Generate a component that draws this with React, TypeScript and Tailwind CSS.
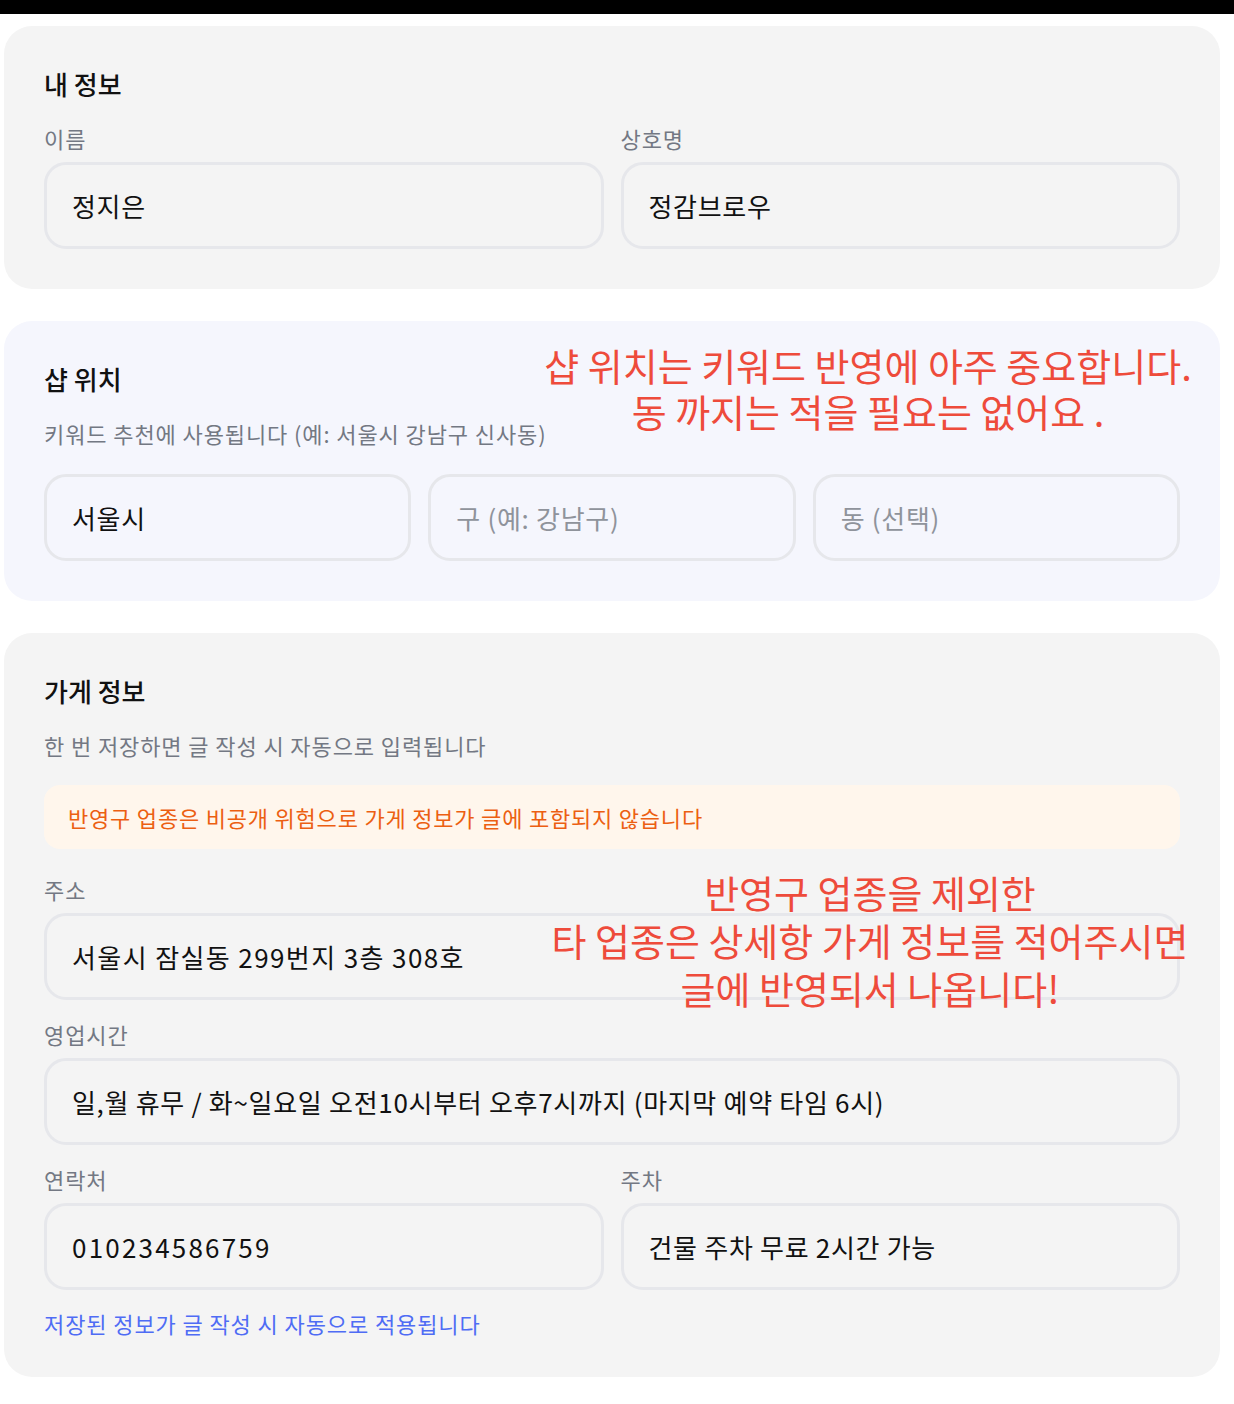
import React from "react";

function Field({
  label,
  value,
  placeholder,
  track = "tracking-[0.7px]",
}: {
  label?: string;
  value?: string;
  placeholder?: string;
  track?: string;
}) {
  return (
    <div className="flex flex-col">
      {label && <p className="text-[22px] leading-7 tracking-[0.9px] text-[#737883] mb-2.5">{label}</p>}
      <div
        className={`h-[87px] border-[3px] border-[#e6e7eb] rounded-[22px] px-[25px] flex items-center text-[26px] ${track}`}
      >
        {value ? (
          <span className="text-[#111111] whitespace-nowrap">{value}</span>
        ) : (
          <span className="text-[#8f939b]">{placeholder}</span>
        )}
      </div>
    </div>
  );
}

export default function App() {
  return (
    <div className="min-h-screen bg-white font-['Noto_Sans_CJK_KR',sans-serif]">
      <div className="h-[14px] bg-black" />
      <div className="pl-1 pr-[14px] pt-3 pb-6 flex flex-col gap-8">
        {/* 내 정보 */}
        <section className="rounded-[28px] bg-[#f4f4f4] p-10">
          <h2 className="text-[26px] leading-9 font-medium text-[#111111] mb-[22px]">내 정보</h2>
          <div className="grid grid-cols-2 gap-[17px]">
            <Field label="이름" value="정지은" />
            <Field label="상호명" value="정감브로우" />
          </div>
        </section>

        {/* 샵 위치 */}
        <section className="relative rounded-[28px] bg-[#f5f6fd] p-10">
          <h2 className="text-[26px] leading-9 font-medium text-[#111111] mb-[22px]">샵 위치</h2>
          <p className="text-[22px] leading-7 tracking-[0.9px] text-[#737883] mb-[27px]">
            키워드 추천에 사용됩니다 (예: 서울시 강남구 신사동)
          </p>
          <div className="grid grid-cols-3 gap-[17px]">
            <Field value="서울시" />
            <Field placeholder="구 (예: 강남구)" />
            <Field placeholder="동 (선택)" />
          </div>
          <div className="absolute left-[530px] top-[21px] w-[668px] text-center text-[38px] leading-[46px] text-[#ee4b3b]">
            <p>샵 위치는 키워드 반영에 아주 중요합니다.</p>
            <p>동 까지는 적을 필요는 없어요 .</p>
          </div>
        </section>

        {/* 가게 정보 */}
        <section className="relative rounded-[28px] bg-[#f4f4f4] px-10 pt-10 pb-[40px]">
          <h2 className="text-[26px] leading-9 font-medium text-[#111111] mb-[22px]">가게 정보</h2>
          <p className="text-[22px] leading-7 tracking-[0.9px] text-[#737883] mb-[26px]">
            한 번 저장하면 글 작성 시 자동으로 입력됩니다
          </p>
          <div className="h-16 rounded-2xl bg-[#fff6ec] px-6 flex items-center text-[22px] tracking-[0.8px] text-[#ec5f12] mb-[26px]">
            반영구 업종은 비공개 위험으로 가게 정보가 글에 포함되지 않습니다
          </div>
          <div className="flex flex-col gap-5">
            <Field label="주소" value="서울시 잠실동 299번지 3층 308호" track="tracking-[1.4px]" />
            <Field label="영업시간" value="일,월 휴무 / 화~일요일 오전10시부터 오후7시까지 (마지막 예약 타임 6시)" />
            <div className="grid grid-cols-2 gap-[17px]">
              <Field label="연락처" value="010234586759" track="tracking-[2.2px]" />
              <Field label="주차" value="건물 주차 무료 2시간 가능" />
            </div>
          </div>
          <p className="mt-[19px] text-[22px] leading-7 tracking-[0.9px] text-[#4f6cf4]">
            저장된 정보가 글 작성 시 자동으로 적용됩니다
          </p>
          <div className="absolute left-[532px] top-[235px] w-[668px] text-center text-[38px] leading-[48px] text-[#ee4b3b]">
            <p>반영구 업종을 제외한</p>
            <p>타 업종은 상세항 가게 정보를 적어주시면</p>
            <p>글에 반영되서 나옵니다!</p>
          </div>
        </section>
      </div>
    </div>
  );
}
